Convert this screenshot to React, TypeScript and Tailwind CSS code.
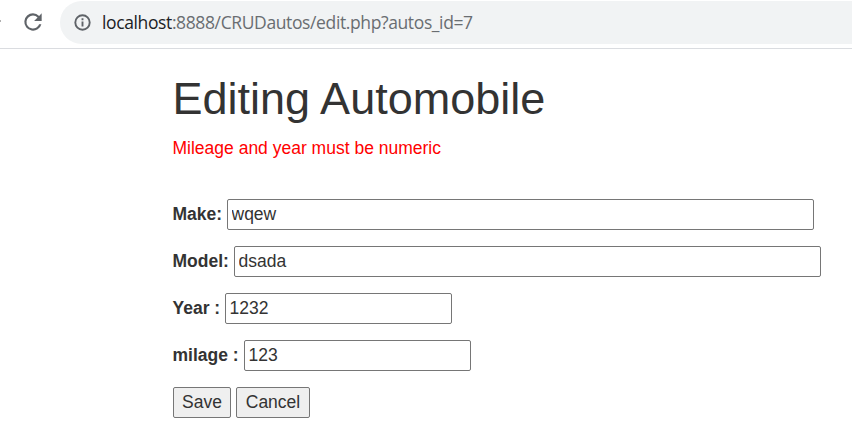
import React from "react";

function Field({ label, value, labelWidth, boxWidth }: { label: string; value: string; labelWidth: string; boxWidth: string }) {
  return (
    <div className="flex h-[31px] items-center">
      <label className={`shrink-0 pb-px font-bold whitespace-nowrap ${labelWidth}`}>{label}</label>
      <input
        defaultValue={value}
        className={`h-[31px] shrink-0 rounded-[2px] border border-[#767676] bg-white px-[4px] outline-none ${boxWidth}`}
      />
    </div>
  );
}

export default function App() {
  return (
    <div className="h-[444px] w-[852px] overflow-hidden bg-white font-['Liberation_Sans',Arial,sans-serif] text-[17.5px] leading-[26px] text-[#333]">
      <header className="flex h-[49px] items-start border-b border-[#dadce0]">
        <div className="mt-[20px] h-[2px] w-px bg-[#b0b0b0]" />
        <svg className="mt-[9px] ml-[19px] h-[26px] w-[26px] shrink-0" viewBox="0 0 24 24" fill="#5f6368">
          <path d="M17.65 6.35A7.96 7.96 0 0 0 12 4a8 8 0 1 0 7.73 10h-2.08A6 6 0 1 1 12 6c1.66 0 3.14.69 4.22 1.78L13 11h7V4z" />
        </svg>
        <div className="mt-[1px] ml-[14px] flex h-[43px] flex-1 items-center rounded-l-full bg-[#f1f3f4] pl-[14px]">
          <svg className="h-[17px] w-[17px] shrink-0" viewBox="0 0 17 17" fill="none" stroke="#5f6368" strokeWidth="1.9">
            <circle cx="8.5" cy="8.5" r="7.2" />
            <path d="M8.5 7.5v5M8.5 4.3v2" />
          </svg>
          <span className="ml-[11px] pb-px font-['Open_Sans',sans-serif] text-[17.5px] tracking-[-0.38px] whitespace-nowrap text-[#696d71]">
            <span className="text-[#202124]">localhost</span>:8888/CRUDautos/edit.php?autos_id=7
          </span>
        </div>
      </header>
      <main className="pl-[172.5px]">
        <h1 className="pt-[25px] text-[45px] leading-[50px]">Editing Automobile</h1>
        <p className="mt-[11px] text-[#f00]">Mileage and year must be numeric</p>
        <form className="mt-[38px] flex flex-col gap-4">
          <Field label="Make:" value="wqew" labelWidth="w-[54px]" boxWidth="w-[587px]" />
          <Field label="Model:" value="dsada" labelWidth="w-[61px]" boxWidth="w-[587px]" />
          <Field label="Year :" value="1232" labelWidth="w-[52px]" boxWidth="w-[227px]" />
          <Field label="milage :" value="123" labelWidth="w-[71px]" boxWidth="w-[227px]" />
          <div className="flex gap-[5px]">
            <button type="button" className="h-[31px] w-[58px] rounded-[2px] border border-[#767676] bg-[#efefef] pb-px pl-px">Save</button>
            <button type="button" className="h-[31px] w-[74px] rounded-[2px] border border-[#767676] bg-[#efefef] pb-px pl-px">Cancel</button>
          </div>
        </form>
      </main>
    </div>
  );
}
